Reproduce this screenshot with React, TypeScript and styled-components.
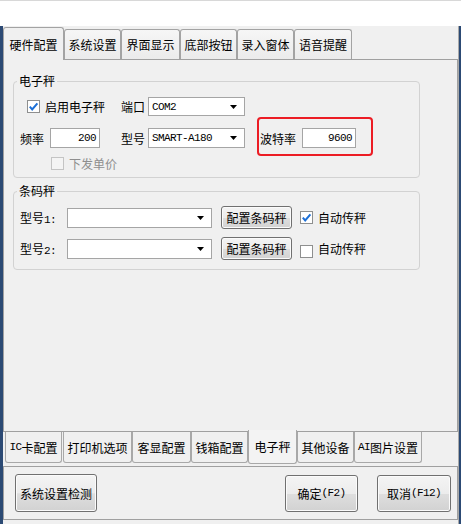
import React from 'react';
import styled, { createGlobalStyle, css } from 'styled-components';

const Global = createGlobalStyle`
  html, body { margin: 0; padding: 0; }
  body {
    background: #2c4a74;
    font-family: "Noto Sans CJK SC", "Liberation Sans", sans-serif;
    font-size: 12px;
    color: #000;
  }
`;

const Screen = styled.div`
  width: 461px;
  height: 524px;
  overflow: hidden;
  display: flex;
  flex-direction: column;
  background: #2c4a74;
`;

const TitleStrip = styled.div`
  flex: none;
  height: 26px;
  background: #ffffff;
  box-sizing: border-box;
  border-top: 1px solid #d8d8d8;
`;

const Window = styled.div`
  flex: 1;
  margin-left: 3px;
  width: 456px;
  box-sizing: border-box;
  background: #f0f0f0;
  border-right: 1px solid #a9a9a9;
  display: flex;
  flex-direction: column;
`;

const Lat = styled.span`
  font-family: "Liberation Mono", "DejaVu Sans Mono", monospace;
  font-size: 11px;
  letter-spacing: -0.6px;
`;

/* ---------- top tabs ---------- */
const TabRow = styled.div`
  display: flex;
  align-items: flex-end;
  height: 33px;
  flex: none;
`;

const TopTab = styled.div<{ $active?: boolean; $w: number }>`
  box-sizing: border-box;
  width: ${p => p.$w}px;
  height: 30px;
  border: 1px solid #a3a3a3;
  border-bottom: none;
  border-radius: 3px 3px 0 0;
  background: linear-gradient(#f6f6f6, #ebebeb);
  display: flex;
  align-items: center;
  justify-content: center;
  white-space: nowrap;
  ${p =>
    p.$active &&
    css`
      height: 33px;
      margin-bottom: -1px;
      background: #f0f0f0;
      position: relative;
      z-index: 2;
    `}
`;

const Panel = styled.div`
  box-sizing: border-box;
  width: 455px;
  height: 373px;
  flex: none;
  border: 1px solid #a0a0a0;
  padding: 13px 0 0 9px;
  display: flex;
  flex-direction: column;
  gap: 5px;
`;

/* ---------- group boxes ---------- */
const Group = styled.fieldset`
  margin: 0;
  padding: 0;
  min-width: 0;
  width: 407px;
  box-sizing: border-box;
  border: 1px solid #d2d2d2;
  border-radius: 4px;
`;

const GroupTitle = styled.legend`
  margin-left: 3px;
  padding: 0 2px;
  height: 16px;
  line-height: 16px;
  font-size: 12px;
`;

const GroupBody = styled.div<{ $pt: number; $pb: number }>`
  display: flex;
  flex-direction: column;
  padding: ${p => p.$pt}px 0 ${p => p.$pb}px 6px;
`;

const Row = styled.div<{ $h: number; $mt?: number }>`
  display: flex;
  align-items: center;
  height: ${p => p.$h}px;
  margin-top: ${p => p.$mt ?? 0}px;
`;

const Cell = styled.div<{ $w?: number }>`
  display: flex;
  align-items: center;
  height: 100%;
  ${p => (p.$w ? `width: ${p.$w}px; flex: none;` : '')}
`;

const Label = styled.span<{ $disabled?: boolean; $w?: number }>`
  white-space: nowrap;
  color: ${p => (p.$disabled ? '#8e8e8e' : '#000')};
  ${p => (p.$w ? `width: ${p.$w}px; flex: none;` : '')}
`;

const CheckWrap = styled.div<{ $ml: number; $dy?: number }>`
  display: flex;
  align-items: center;
  gap: 5px;
  margin-left: ${p => p.$ml}px;
  position: relative;
  top: ${p => p.$dy ?? 0}px;
`;

const Box = styled.span<{ $disabled?: boolean; $dy?: number }>`
  width: 13px;
  height: 13px;
  box-sizing: border-box;
  flex: none;
  border: 1px solid ${p => (p.$disabled ? '#c4c4c4' : '#8e8f8f')};
  background: ${p => (p.$disabled ? '#f4f4f4' : '#ffffff')};
  display: flex;
  align-items: center;
  justify-content: center;
  position: relative;
  top: ${p => p.$dy ?? 0}px;
`;

const Combo = styled.div<{ $w: number; $h: number; $ml: number }>`
  box-sizing: border-box;
  width: ${p => p.$w}px;
  height: ${p => p.$h}px;
  margin-left: ${p => p.$ml}px;
  flex: none;
  border: 1px solid #a5a5a5;
  background: #ffffff;
  display: flex;
  align-items: center;
  padding: 0 7px 0 3px;
`;

const Arrow = styled.svg`
  margin-left: auto;
  flex: none;
`;

const Field = styled.div<{ $w: number; $ml: number }>`
  box-sizing: border-box;
  width: ${p => p.$w}px;
  height: 20px;
  margin-left: ${p => p.$ml}px;
  flex: none;
  border: 1px solid #a5a5a5;
  background: #ffffff;
  display: flex;
  align-items: center;
  justify-content: flex-end;
  padding-right: 3px;
`;

const BaudCell = styled.div`
  display: flex;
  align-items: center;
  height: 100%;
  position: relative;
  &::after {
    content: '';
    position: absolute;
    left: -3px;
    right: -17px;
    top: -11px;
    bottom: -8px;
    border: 2px solid #ec1c24;
    border-radius: 4px;
    pointer-events: none;
  }
`;

const Button = styled.button<{ $w: number; $h: number; $ml?: number }>`
  box-sizing: border-box;
  width: ${p => p.$w}px;
  height: ${p => p.$h}px;
  margin: 0 0 0 ${p => p.$ml ?? 0}px;
  padding: 0;
  flex: none;
  font: inherit;
  color: #000;
  border: 1px solid #707070;
  border-radius: 3px;
  background: linear-gradient(#f4f4f4 0%, #ececec 50%, #dedede 52%, #d2d2d2 100%);
  box-shadow: inset 0 0 0 1px #fbfbfb;
  display: flex;
  align-items: center;
  justify-content: center;
  white-space: nowrap;
`;

/* ---------- bottom tabs ---------- */
const BottomTabRow = styled.div`
  display: flex;
  align-items: flex-start;
  height: 34px;
  flex: none;
  padding-left: 2px;
`;

const BottomTab = styled.div<{ $active?: boolean; $w: number; $ml?: number }>`
  box-sizing: border-box;
  width: ${p => p.$w}px;
  height: 31px;
  margin-left: ${p => p.$ml ?? 0}px;
  border: 1px solid #a8a8a8;
  border-top: none;
  border-radius: 0 0 3px 3px;
  background: #f0f0f0;
  display: flex;
  align-items: center;
  justify-content: center;
  white-space: nowrap;
  ${p =>
    p.$active &&
    css`
      height: 34px;
      margin-top: -2px;
      position: relative;
      z-index: 2;
      background: #f3f3f3;
    `}
`;

const ButtonPanel = styled.div`
  box-sizing: border-box;
  width: 455px;
  height: 54px;
  flex: none;
  border: 1px solid #a0a0a0;
  display: flex;
  align-items: center;
  padding: 0 6px 0 11px;
`;

const Spacer = styled.div`
  flex: 1;
`;

const Check = () => (
  <svg width="11" height="11" viewBox="0 0 11 11">
    <path d="M1.8 5.6 L4.2 8.4 L9.4 2.4" stroke="#1c6fd6" strokeWidth="2" fill="none" />
  </svg>
);

const DropArrow = () => (
  <Arrow width="7" height="4" viewBox="0 0 7 4">
    <polygon points="0,0 7,0 3.5,4" fill="#000" />
  </Arrow>
);

const topTabs = [
  { label: '硬件配置', w: 61 },
  { label: '系统设置', w: 57 },
  { label: '界面显示', w: 59 },
  { label: '底部按钮', w: 57 },
  { label: '录入窗体', w: 57 },
  { label: '语音提醒', w: 58 },
];

export default function App() {
  return (
    <>
      <Global />
      <Screen>
        <TitleStrip />
        <Window>
          <TabRow>
            {topTabs.map((t, i) => (
              <TopTab key={t.label} $active={i === 0} $w={t.w}>
                {t.label}
              </TopTab>
            ))}
          </TabRow>
          <Panel>
            <Group>
              <GroupTitle>电子秤</GroupTitle>
              <GroupBody $pt={8} $pb={7}>
                <Row $h={19}>
                  <Cell $w={101}>
                    <CheckWrap $ml={7}>
                      <Box>
                        <Check />
                      </Box>
                      <Label>启用电子秤</Label>
                    </CheckWrap>
                  </Cell>
                  <Cell $w={139}>
                    <Label $w={24}>端口</Label>
                    <Combo $w={97} $h={19} $ml={3}>
                      <Lat>COM2</Lat>
                      <DropArrow />
                    </Combo>
                  </Cell>
                </Row>
                <Row $h={20} $mt={12}>
                  <Cell $w={101}>
                    <Label $w={24}>频率</Label>
                    <Field $w={50} $ml={6}>
                      <Lat>200</Lat>
                    </Field>
                  </Cell>
                  <Cell $w={139}>
                    <Label $w={24}>型号</Label>
                    <Combo $w={97} $h={20} $ml={3}>
                      <Lat>SMART-A180</Lat>
                      <DropArrow />
                    </Combo>
                  </Cell>
                  <BaudCell>
                    <Label $w={36}>波特率</Label>
                    <Field $w={54} $ml={6}>
                      <Lat>9600</Lat>
                    </Field>
                  </BaudCell>
                </Row>
                <Row $h={14} $mt={8}>
                  <CheckWrap $ml={31}>
                    <Box $disabled />
                    <Label $disabled>下发单价</Label>
                  </CheckWrap>
                </Row>
              </GroupBody>
            </Group>

            <Group>
              <GroupTitle>条码秤</GroupTitle>
              <GroupBody $pt={7} $pb={9}>
                <Row $h={23}>
                  <Label $w={47}>
                    型号<Lat>1:</Lat>
                  </Label>
                  <Combo $w={145} $h={20} $ml={0}>
                    <DropArrow />
                  </Combo>
                  <Button $w={71} $h={23} $ml={9}>
                    配置条码秤
                  </Button>
                  <CheckWrap $ml={8}>
                    <Box>
                      <Check />
                    </Box>
                    <Label>自动传秤</Label>
                  </CheckWrap>
                </Row>
                <Row $h={23} $mt={8}>
                  <Label $w={47}>
                    型号<Lat>2:</Lat>
                  </Label>
                  <Combo $w={145} $h={20} $ml={0}>
                    <DropArrow />
                  </Combo>
                  <Button $w={71} $h={23} $ml={9}>
                    配置条码秤
                  </Button>
                  <CheckWrap $ml={8}>
                    <Box $dy={3} />
                    <Label>自动传秤</Label>
                  </CheckWrap>
                </Row>
              </GroupBody>
            </Group>
          </Panel>

          <BottomTabRow>
            <BottomTab $w={57}>
              <Lat>IC</Lat>卡配置
            </BottomTab>
            <BottomTab $w={69} $ml={1}>
              打印机选项
            </BottomTab>
            <BottomTab $w={59}>客显配置</BottomTab>
            <BottomTab $w={57}>钱箱配置</BottomTab>
            <BottomTab $w={49} $active>
              电子秤
            </BottomTab>
            <BottomTab $w={57}>其他设备</BottomTab>
            <BottomTab $w={68}>
              <Lat>AI</Lat>图片设置
            </BottomTab>
          </BottomTabRow>

          <ButtonPanel>
            <Button $w={82} $h={38}>
              系统设置检测
            </Button>
            <Spacer />
            <Button $w={73} $h={37}>
              确定<Lat>(F2)</Lat>
            </Button>
            <Button $w={74} $h={37} $ml={19}>
              取消<Lat>(F12)</Lat>
            </Button>
          </ButtonPanel>
        </Window>
      </Screen>
    </>
  );
}
